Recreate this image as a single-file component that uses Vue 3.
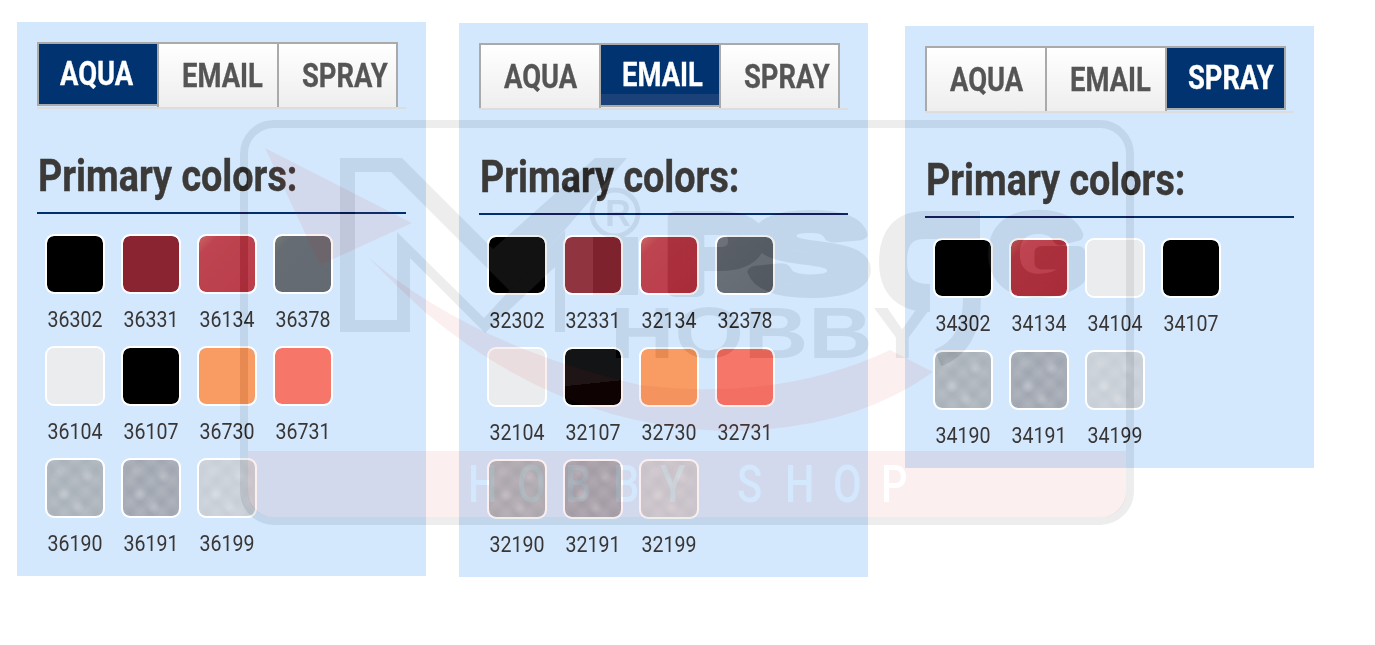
<script setup>
const bright = 'linear-gradient(135deg,#cb6664 0,#bd4450 18%,#bb3d4b 100%)'
const sets = [
  { code: 'a', active: 0, items: [
    ['36302', '#000'], ['36331', '#8b2431'], ['36134', bright], ['36378', 'linear-gradient(135deg,#757c76 0,#666c72 16%,#646a72 100%)'],
    ['36104', '#ebecee'], ['36107', '#000'], ['36730', '#f89c64'], ['36731', '#f6766a'],
    ['36190', '#a9b1b9', 1], ['36191', '#a0a6b0', 1], ['36199', '#c7ced6', 1],
  ] },
  { code: 'b', active: 1, items: [
    ['32302', '#000'], ['32331', '#90343f'], ['32134', bright], ['32378', 'linear-gradient(135deg,#6c7278 0,#646a72 100%)'],
    ['32104', '#ebecee'], ['32107', 'linear-gradient(174deg,#121416 0 60%,#000 60%)'], ['32730', '#f89c64'], ['32731', '#f6766a'],
    ['32190', '#a9b1b9', 1], ['32191', '#a0a6b0', 1], ['32199', '#c7ced6', 1],
  ] },
  { code: 'c', active: 2, items: [
    ['34302', '#000'], ['34134', bright], ['34104', '#ebecee'], ['34107', '#000'],
    ['34190', '#a9b1b9', 1], ['34191', '#a0a6b0', 1], ['34199', '#c7ced6', 1],
  ] },
]
const tabs = ['AQUA', 'EMAIL', 'SPRAY']
const shop = [['H', 468], ['O', 517], ['B', 565], ['B', 613], ['Y', 660], ['S', 737], ['H', 785], ['O', 833], ['P', 881]]
</script>

<template>
  <div class="page">
    <section v-for="set in sets" :key="set.code" class="panel" :class="'panel-' + set.code">
      <div class="tabs">
        <div v-for="(t, i) in tabs" :key="t" class="tab" :class="{ active: i === set.active }">
          <span class="tab-text">{{ t }}</span>
        </div>
      </div>
      <h2 class="heading"><span>Primary colors:</span></h2>
      <div class="grid">
        <div v-for="it in set.items" :key="it[0]" class="item">
          <div class="swatch" :class="{ metal: it[2] }" :style="{ background: it[1] }"></div>
          <div class="label"><span>{{ it[0] }}</span></div>
        </div>
      </div>
    </section>

    <svg class="mark tint" width="1375" height="645" viewBox="0 0 1375 645" aria-hidden="true">
      <defs>
        <mask id="shop-cut" maskUnits="userSpaceOnUse" x="0" y="0" width="1375" height="645">
          <rect width="1375" height="645" fill="#fff" />
          <g fill="#000" font-family="Roboto, sans-serif" font-weight="500" font-size="52">
            <text v-for="(l, i) in shop" :key="i" :transform="`translate(${l[1]} 502) scale(.8 1)`">{{ l[0] }}</text>
          </g>
        </mask>
      </defs>
      <g fill="#d41a1a" fill-opacity=".07">
        <path d="M265,148 L412,223 L320,265 Z" />
        <path d="M368,257 Q470,345 640,385 Q780,402 890,350 L933,372 Q850,432 720,431 Q560,425 426,313 Q395,285 368,257 Z" />
        <path mask="url(#shop-cut)" d="M248,451 H1126 V492 A24,24 0 0 1 1102,517 H272 A24,24 0 0 1 248,492 Z" />
      </g>
    </svg>

    <svg class="mark diff" width="1375" height="645" viewBox="0 0 1375 645" aria-hidden="true">
      <g fill="#121212">
        <rect x="244" y="124" width="886" height="397" rx="30" fill="none" stroke="#121212" stroke-width="8" />
        <polygon points="340,158 402,158 493,249 595,158 627,158 511,292 391,172 340,172" />
        <polygon points="340,158 355,158 355,320 397,320 397,232 484,318 565,230 565,332 555,332 555,267 485,333 410,258 410,332 340,332" />
        <rect x="593" y="237" width="45" height="58" />
        <circle cx="615" cy="213" r="23" fill="none" stroke="#121212" stroke-width="5" />
        <path d="M980,225 H925 Q893,225 893,262 Q893,298 930,298" fill="none" stroke="#121212" stroke-width="28" />
        <path d="M972,298 Q972,345 938,358" fill="none" stroke="#121212" stroke-width="18" />
        <g font-family="'Liberation Sans', sans-serif" font-weight="700">
          <text x="605" y="226" font-size="36">R</text>
          <g stroke="#121212" stroke-width="12" stroke-linejoin="round">
            <text x="666" y="291" font-size="108" textLength="96" lengthAdjust="spacingAndGlyphs">P</text>
            <text x="752" y="291" font-size="108" textLength="116" lengthAdjust="spacingAndGlyphs">S</text>
            <text x="990" y="291" font-size="108" textLength="96" lengthAdjust="spacingAndGlyphs">G</text>
          </g>
          <text x="610" y="358" font-size="73" textLength="322" lengthAdjust="spacingAndGlyphs">HOBBY</text>
        </g>
      </g>
    </svg>
  </div>
</template>

<style scoped>
.page {
  position: relative;
  width: 1375px;
  height: 645px;
  overflow: hidden;
  display: flex;
  align-items: flex-start;
  padding-left: 17px;
  box-sizing: border-box;
  font-family: Roboto, "Liberation Sans", sans-serif;
  background: #fff;
}
.panel {
  width: 409px;
  box-sizing: border-box;
  padding: 20px 20px 6px;
  background: #d3e8fd;
  flex: none;
}
.panel-a { margin-top: 22px; }
.panel-b { margin-top: 23px; margin-left: 33px; }
.panel-c { margin-top: 26px; margin-left: 37px; }
.tabs {
  display: flex;
  height: 65px;
  border-bottom: 2px solid #ddd;
}
.tab {
  width: 122px;
  height: 65px;
  margin-right: -2px;
  box-sizing: border-box;
  border: 2px solid #aaa;
  border-bottom: 0;
  padding-left: 23px;
  background: linear-gradient(#fff, #eee);
  color: #555;
  font-size: 33px;
  font-weight: 700;
  line-height: 63px;
  -webkit-text-stroke: .3px currentColor;
  flex: none;
}
.tab:last-child { width: 121px; }
.tab.active {
  position: relative;
  z-index: 1;
  height: 64px;
  border-bottom: 2px solid #aaa;
  padding-left: 21px;
  background: #003370;
  color: #fff;
  line-height: 59px;
}
.panel-b .tab.active { background: linear-gradient(#003370 0 49px, #1a4278 49px); }
.tab-text {
  display: inline-block;
  transform: scaleX(.83);
  transform-origin: 0 50%;
}
.heading {
  margin: 38px 0 20px;
  height: 67px;
  box-sizing: border-box;
  border-bottom: 2px solid #002f6c;
  color: #3c3a38;
  font-size: 44px;
  font-weight: 700;
  line-height: 58px;
  -webkit-text-stroke: .4px currentColor;
}
.heading span {
  display: inline-block;
  margin-left: 1px;
  transform: scaleX(.857);
  transform-origin: 0 50%;
}
.grid {
  display: grid;
  grid-template-columns: repeat(4, 76px);
}
.item {
  height: 112px;
}
.swatch {
  width: 60px;
  height: 60px;
  margin: 0 auto;
  box-sizing: border-box;
  border: 2px solid #fff;
  border-radius: 9px;
  background-clip: padding-box !important;
}
.metal {
  background-image:
    radial-gradient(circle at 30% 62%, rgba(255,255,255,.24) 0, transparent 7px),
    radial-gradient(circle at 72% 30%, rgba(255,255,255,.24) 0, transparent 7px),
    radial-gradient(circle at 55% 85%, rgba(255,255,255,.22) 0, transparent 7px),
    radial-gradient(circle at 20% 20%, rgba(255,255,255,.14) 0, transparent 8px),
    repeating-linear-gradient(45deg, rgba(255,255,255,.08), rgba(255,255,255,0) 7px, rgba(255,255,255,.08) 15px),
    repeating-linear-gradient(-45deg, rgba(255,255,255,.08), rgba(255,255,255,0) 7px, rgba(255,255,255,.08) 15px) !important;
}
.label {
  margin-top: 12px;
  height: 28px;
  color: #3a3636;
  font-size: 22px;
  line-height: 28px;
  text-align: center;
}
.label span {
  display: inline-block;
  transform: scaleX(.89);
}
.mark {
  position: absolute;
  left: 0;
  top: 0;
  pointer-events: none;
}
.diff {
  mix-blend-mode: difference;
}
</style>
